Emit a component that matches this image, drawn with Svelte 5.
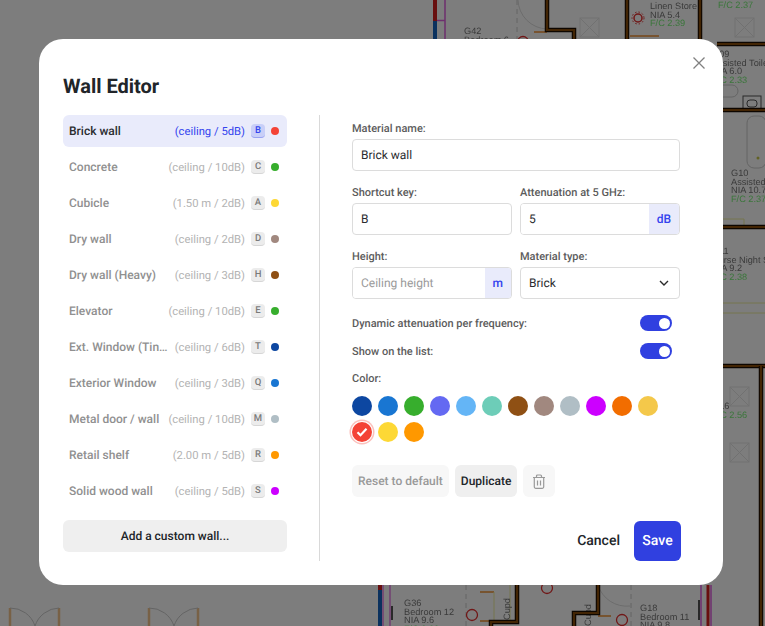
<script>
    const walls = [
        { name: "Brick wall", info: "(ceiling / 5dB)", key: "B", color: "#f44336" },
        { name: "Concrete", info: "(ceiling / 10dB)", key: "C", color: "#37ae2d" },
        { name: "Cubicle", info: "(1.50 m / 2dB)", key: "A", color: "#fdd835" },
        { name: "Dry wall", info: "(ceiling / 2dB)", key: "D", color: "#a1887f" },
        { name: "Dry wall (Heavy)", info: "(ceiling / 3dB)", key: "H", color: "#8f5014" },
        { name: "Elevator", info: "(ceiling / 10dB)", key: "E", color: "#37ae2d" },
        { name: "Ext. Window (Tinted)", info: "(ceiling / 6dB)", key: "T", color: "#0d47a1" },
        { name: "Exterior Window", info: "(ceiling / 3dB)", key: "Q", color: "#1976d2" },
        { name: "Metal door / wall", info: "(ceiling / 10dB)", key: "M", color: "#b0bec5" },
        { name: "Retail shelf", info: "(2.00 m / 5dB)", key: "R", color: "#ff9800" },
        { name: "Solid wood wall", info: "(ceiling / 5dB)", key: "S", color: "#cc00ff" },
    ];

    const swatches = [
        "#0d47a1", "#1976d2", "#37ae2d", "#6469f2", "#64b5f6", "#6dcdb8",
        "#8f5014", "#a1887f", "#b0bec5", "#cc00ff", "#f26d00", "#f4c84a",
        "#f44336", "#fdd835", "#ff9800",
    ];

    let selected = $state(0);
    let color = $state("#f44336");
    let dynamic = $state(true);
    let listed = $state(true);

    // room labels of the plan behind the dialog
    const labels = [
        { x: 464, y: 34, lines: ["G42", "Bedroom 6"] },
        { x: 650, y: 9, lines: ["Linen Store", "NIA 5.4"], green: "F/C  2.39" },
        { x: 718, y: 8, lines: [], green: "F/C  2.37" },
        { x: 712, y: 57, lines: ["G09", "Assisted Toilet", "NIA 6.0"], green: "F/C  2.33" },
        { x: 731, y: 176, lines: ["G10", "Assisted", "NIA 10.7"], green: "F/C  2.37" },
        { x: 712, y: 254, lines: ["G11", "Nurse Night St", "NIA 9.2"], green: "F/C  2.38" },
        { x: 712, y: 409, lines: ["G16"], green: "F/C 2.56" },
        { x: 404, y: 606, lines: ["G36", "Bedroom 12", "NIA 9.6"], green: "F/C  2.38" },
        { x: 640, y: 611, lines: ["G18", "Bedroom 11", "NIA 9.8"] },
    ];
    const structure = [
        "M547 0V30H574V39",
        "M627 0V39",
        "M700 0V39",
        "M717 44H765",
        "M717 110H765",
        "M723 227H765",
        "M723 366H765",
        "M761 366V626",
        "M517 585V622H491V626",
        "M598 585V613H574V626",
    ];
    const detectors = [[580, 18], [735, 18], [730, 387], [730, 443]];
    const alarms = [[472, 615], [547, 588], [622, 620], [523, 42]];
</script>

<div class="page">
    <svg class="plan" width="765" height="626" viewBox="0 0 765 626">
        <rect width="765" height="626" fill="#fff" />

        <!-- top corridor -->
        <path d="M435 0V21" stroke="#d42020" stroke-width="4" />
        <path d="M435 21V39" stroke="#1565c0" stroke-width="4" />
        <path d="M445 0V39M437 20.500H445" stroke="#e060e0" stroke-width="1.500" fill="none" />
        <path d="M517 0V39" stroke="#ccc" stroke-dasharray="5 4" />
        <path d="M518 0A30 30 0 0 0 547 29" stroke="#ddd" fill="none" />
        <path d="M534 32H547" stroke="#f09030" stroke-width="1.500" />
        <path d="M630 36H659" stroke="#f09030" stroke-width="1.500" />
        <circle cx="638" cy="18" r="4" fill="none" stroke="#e53030" stroke-width="1.500" />
        <circle cx="638" cy="18" r="6" fill="none" stroke="#e53030" stroke-dasharray="1.500 2" />

        <!-- right wing -->
        <rect x="743" y="96" width="18" height="14" fill="none" stroke="#555" />
        <rect x="747" y="100" width="10" height="7" rx="3" fill="none" stroke="#555" />
        <path d="M723 85H732A6 6 0 0 1 732 97H723" fill="none" stroke="#ccc" />
        <rect x="747" y="116" width="19" height="52" rx="7" fill="none" stroke="#ccc" />
        <circle cx="758" cy="158" r="1.500" fill="#c9c94a" />
        <path d="M723 303H765M723 313H765" stroke="#eeeea0" />
        <path d="M723 219H744V227" fill="none" stroke="#eeeea0" />

        <!-- bottom doors -->
        <path d="M10 608V626M59 608V626M149 608V626M198 608V626" stroke="#f4c690" stroke-width="2.500" />
        <path d="M10 608A26 26 0 0 1 35 626M59 608A26 26 0 0 0 35 626M149 608A26 26 0 0 1 174 626M198 608A26 26 0 0 0 174 626" fill="none" stroke="#ccc" />

        <!-- bottom rooms -->
        <path d="M380 585V590" stroke="#d42020" stroke-width="4" />
        <path d="M380 590V626" stroke="#1565c0" stroke-width="4" />
        <path d="M383 585V626M390 585V626" stroke="#e060e0" stroke-width="1.200" />
        <path d="M392 606V620M699 600V620" stroke="#555" stroke-width="2" />
        <path d="M466 585V626" stroke="#ccc" stroke-dasharray="5 4" />
        <path d="M480 592H494M480 621H494M598 616H611" stroke="#f09030" stroke-width="1.500" />
        <path d="M494 592V622H510V585" fill="none" stroke="#eeeea0" />
        <path d="M598 585A30 30 0 0 0 630 606" fill="none" stroke="#ddd" />
        <path d="M631 585V626" stroke="#ccc" stroke-dasharray="5 4" />
        <path d="M701 585V626" stroke="#e060e0" stroke-width="1.500" />
        <path d="M708 585V626" stroke="#d42020" stroke-width="3" />
        <path d="M711 585V626" stroke="#e060e0" stroke-width="1.500" />
        <text class="room" transform="translate(510 620) rotate(-90)">Cupd</text>
        <text class="room" transform="translate(591 626) rotate(-90)">Cupd</text>

        {#each structure as d}
            <path {d} fill="none" stroke="#1c0e00" stroke-width="4.500" />
            <path {d} fill="none" stroke="#8a4c0a" stroke-width="2.200" />
        {/each}

        {#each alarms as [x, y]}
            <circle cx={x} cy={y} r="5.500" fill="none" stroke="#e53030" stroke-width="1.300" />
        {/each}

        {#each detectors as [x, y]}
            <g fill="none" stroke="#e6e6e6">
                <rect x={x} y={y} width="19" height="19" />
                <path d="M{x} {y}l19 19M{x + 19} {y}l-19 19" />
            </g>
        {/each}

        {#each labels as label}
            <text class="room" x={label.x} y={label.y}>
                {#each label.lines as line, i}
                    <tspan x={label.x} dy={i ? 8.700 : 0}>{line}</tspan>
                {/each}
                {#if label.green}
                    <tspan x={label.x} dy={label.lines.length ? 8.700 : 0} fill="#7af07a">{label.green}</tspan>
                {/if}
            </text>
        {/each}
    </svg>

    <div class="scrim">
        <div class="modal">
            <button class="close" aria-label="Close">
                <svg width="14" height="14" viewBox="0 0 14 14">
                    <path d="M1.500 1.500l11 11M12.500 1.500l-11 11" stroke="#808080" stroke-width="1.300" fill="none" />
                </svg>
            </button>

            <h1>Wall Editor</h1>

            <div class="body">
                <div class="left">
                    <ul class="wall-list">
                        {#each walls as wall, i}
                            <li>
                                <button class="wall" class:active={selected === i} onclick={() => (selected = i)}>
                                    <span class="name">{wall.name}</span>
                                    <span class="info">{wall.info}</span>
                                    <span class="key">{wall.key}</span>
                                    <span class="dot" style="background: {wall.color}"></span>
                                </button>
                            </li>
                        {/each}
                    </ul>
                    <button class="add">Add a custom wall...</button>
                </div>

                <div class="right">
                    <div class="field">
                        <label for="mat-name">Material name:</label>
                        <input id="mat-name" value="Brick wall" />
                    </div>

                    <div class="two">
                        <div class="field">
                            <label for="shortcut">Shortcut key:</label>
                            <input id="shortcut" value="B" />
                        </div>
                        <div class="field">
                            <label for="atten">Attenuation at 5 GHz:</label>
                            <div class="group">
                                <input id="atten" value="5" />
                                <span class="unit">dB</span>
                            </div>
                        </div>
                        <div class="field">
                            <label for="height">Height:</label>
                            <div class="group">
                                <input id="height" placeholder="Ceiling height" />
                                <span class="unit">m</span>
                            </div>
                        </div>
                        <div class="field">
                            <label for="type">Material type:</label>
                            <div class="select">
                                <select id="type">
                                    <option>Brick</option>
                                    <option>Concrete</option>
                                    <option>Glass</option>
                                </select>
                                <svg width="10" height="6" viewBox="0 0 10 6">
                                    <path d="M1 1l4 4 4-4" stroke="#2b2b2b" stroke-width="1.400" fill="none" />
                                </svg>
                            </div>
                        </div>
                    </div>

                    <div class="toggle-row">
                        <span>Dynamic attenuation per frequency:</span>
                        <button class="toggle" class:on={dynamic} aria-label="Dynamic attenuation" onclick={() => (dynamic = !dynamic)}></button>
                    </div>
                    <div class="toggle-row">
                        <span>Show on the list:</span>
                        <button class="toggle" class:on={listed} aria-label="Show on the list" onclick={() => (listed = !listed)}></button>
                    </div>

                    <div class="color-label">Color:</div>
                    <div class="swatches">
                        {#each swatches as c}
                            <button class="swatch" class:picked={color === c} style="background: {c}; --ring: {c}55" aria-label={c} onclick={() => (color = c)}>
                                {#if color === c}
                                    <svg width="12" height="10" viewBox="0 0 12 10">
                                        <path d="M1.500 5.200l3 3 6-6.400" stroke="#fff" stroke-width="2.200" fill="none" />
                                    </svg>
                                {/if}
                            </button>
                        {/each}
                    </div>

                    <div class="actions">
                        <button class="soft muted">Reset to default</button>
                        <button class="soft">Duplicate</button>
                        <button class="soft trash" aria-label="Delete">
                            <svg width="14" height="15" viewBox="0 0 14 15" fill="none" stroke="#999" stroke-width="1.200">
                                <path d="M1 3.500h12M4.500 3.500V2a1 1 0 0 1 1-1h3a1 1 0 0 1 1 1v1.500" />
                                <path d="M2.300 3.500v9.300a1.500 1.500 0 0 0 1.500 1.500h6.400a1.500 1.500 0 0 0 1.500-1.500V3.500" />
                                <path d="M5.500 6.500v5M8.500 6.500v5" />
                            </svg>
                        </button>
                    </div>

                    <div class="footer">
                        <button class="cancel">Cancel</button>
                        <button class="save">Save</button>
                    </div>
                </div>
            </div>
        </div>
    </div>
</div>

<style>
    :global(body) {
        margin: 0;
        font-family: Roboto, "Liberation Sans", sans-serif;
        text-rendering: geometricPrecision;
    }

    button,
    input,
    select {
        text-rendering: geometricPrecision;
    }

    button {
        font-family: inherit;
        border: 0;
        padding: 0;
        background: none;
        cursor: pointer;
    }

    .page {
        position: relative;
        width: 765px;
        height: 626px;
        overflow: hidden;
    }

    .plan {
        position: absolute;
        inset: 0;
        display: block;
        filter: blur(0.4px);
    }
    .room {
        font-family: "Liberation Sans", sans-serif;
        font-size: 9.200px;
        fill: #777;
    }

    .scrim {
        position: absolute;
        inset: 0;
        background: rgba(0, 0, 0, 0.51);
    }

    .modal {
        position: relative;
        box-sizing: border-box;
        width: 684px;
        height: 546px;
        margin: 39px 0 0 39px;
        padding: 31px 24px 24px;
        background: #fff;
        border-radius: 24px;
    }

    .close {
        position: absolute;
        top: 17px;
        right: 17px;
        width: 14px;
        height: 14px;
        display: flex;
    }

    h1 {
        margin: 0 0 13px;
        font-size: 20px;
        line-height: 32px;
        font-weight: 700;
        color: #212529;
    }

    .body {
        display: flex;
        height: 446px;
    }

    .left {
        width: 224px;
        padding-right: 32px;
        border-right: 1px solid #d9d9d9;
    }

    .wall-list {
        list-style: none;
        margin: 0 0 13px;
        padding: 0;
        display: flex;
        flex-direction: column;
        gap: 4px;
    }

    .wall {
        box-sizing: border-box;
        width: 100%;
        height: 32px;
        padding: 0 8px 0 6px;
        display: flex;
        align-items: center;
        border-radius: 6px;
        text-align: left;
    }
    .wall.active {
        background: #e9ebfb;
    }
    .name {
        flex: 1;
        min-width: 0;
        white-space: nowrap;
        overflow: hidden;
        text-overflow: ellipsis;
        font-size: 12px;
        font-weight: 500;
        color: #909090;
    }
    .info {
        flex-shrink: 0;
        margin-left: 4px;
        font-size: 11.250px;
        color: #b3b3b3;
    }
    .key {
        flex-shrink: 0;
        box-sizing: border-box;
        width: 14px;
        height: 14px;
        margin-left: 6px;
        display: flex;
        align-items: center;
        justify-content: center;
        border-radius: 4px;
        border-bottom: 1.500px solid #d6d6d6;
        background: #ececec;
        font-size: 9.500px;
        font-weight: 500;
        color: #7a7a7a;
    }
    .dot {
        flex-shrink: 0;
        width: 8px;
        height: 8px;
        margin-left: 6px;
        border-radius: 50%;
    }
    .active .name {
        color: #2b2d30;
    }
    .active .info {
        color: #3344ee;
    }
    .active .key {
        background: #c9cff8;
        border-bottom-color: #98a2f2;
        color: #3344ee;
    }

    .add {
        width: 100%;
        height: 32px;
        border-radius: 6px;
        background: #efefef;
        font-size: 12px;
        font-weight: 500;
        color: #212529;
    }

    .right {
        flex: 1;
        padding: 4px 0 0 32px;
        min-width: 0;
    }

    .field label,
    .color-label {
        display: block;
        height: 20px;
        font-size: 11px;
        font-weight: 500;
        line-height: 20px;
        color: #5c5c5c;
    }

    .field {
        width: 328px;
        margin-bottom: 12px;
    }
    .two {
        width: 328px;
        display: grid;
        grid-template-columns: 160px 160px;
        column-gap: 8px;
    }
    .two .field {
        width: 160px;
    }

    input,
    select {
        box-sizing: border-box;
        display: block;
        width: 100%;
        height: 32px;
        margin: 0;
        padding: 0 8px;
        border: 1px solid #dcdcdc;
        border-radius: 4px;
        outline: 0;
        background: #fff;
        font-family: inherit;
        font-size: 12px;
        color: #2b2d30;
    }
    input::placeholder {
        color: #9a9a9a;
    }

    .group {
        display: flex;
        height: 32px;
        border: 1px solid #dcdcdc;
        border-radius: 4px;
        box-sizing: border-box;
        overflow: hidden;
    }
    .group input {
        flex: 1;
        min-width: 0;
        height: 30px;
        border: 0;
        border-radius: 0;
    }
    .unit {
        padding: 0 8px;
        display: flex;
        align-items: center;
        justify-content: center;
        background: #e9ebfb;
        font-size: 12px;
        font-weight: 500;
        color: #3344ee;
    }

    .select {
        position: relative;
    }
    select {
        appearance: none;
    }
    .select svg {
        position: absolute;
        top: 13px;
        right: 11px;
        pointer-events: none;
    }

    .toggle-row {
        width: 320px;
        height: 28px;
        display: flex;
        align-items: center;
        justify-content: space-between;
        font-size: 11px;
        font-weight: 500;
        color: #5c5c5c;
    }
    .two + .toggle-row {
        margin-top: -2px;
    }
    .toggle {
        position: relative;
        width: 32px;
        height: 16px;
        border-radius: 8px;
        background: #c4c4c4;
    }
    .toggle.on {
        background: #3040e0;
    }
    .toggle::after {
        content: "";
        position: absolute;
        top: 2.500px;
        left: 2.500px;
        width: 11px;
        height: 11px;
        border-radius: 50%;
        background: #fff;
    }
    .toggle.on::after {
        left: 18.500px;
    }

    .color-label {
        margin-top: 4px;
        margin-bottom: 7px;
    }

    .swatches {
        width: 312px;
        display: flex;
        flex-wrap: wrap;
        gap: 6px;
    }
    .swatch {
        width: 20px;
        height: 20px;
        border-radius: 50%;
        display: flex;
        align-items: center;
        justify-content: center;
    }
    .swatch.picked {
        box-shadow: 0 0 0 1px #fff, 0 0 0 2.500px var(--ring);
    }

    .actions {
        display: flex;
        gap: 6px;
        margin-top: 23px;
    }
    .soft {
        height: 32px;
        padding: 0 6px;
        border-radius: 6px;
        background: #efefef;
        font-size: 12px;
        font-weight: 500;
        color: #212529;
    }
    .soft.muted {
        background: #f7f7f7;
        color: #999;
    }
    .soft.trash {
        width: 32px;
        display: flex;
        align-items: center;
        justify-content: center;
        background: #f7f7f7;
    }

    .footer {
        width: 329px;
        display: flex;
        justify-content: flex-end;
        align-items: center;
        gap: 14px;
        margin-top: 24px;
    }
    .cancel {
        font-size: 14px;
        font-weight: 500;
        color: #212529;
    }
    .save {
        width: 47px;
        height: 40px;
        border-radius: 6px;
        background: #3040e0;
        font-size: 14px;
        font-weight: 500;
        color: #fff;
    }
</style>
